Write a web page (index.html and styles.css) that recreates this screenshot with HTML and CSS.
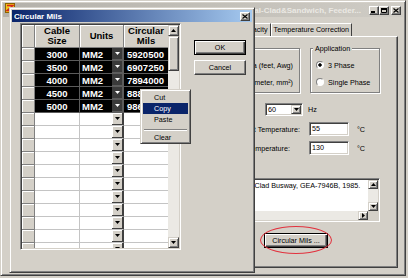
FILE: index.html
```html
<!DOCTYPE html>
<html>
<head>
  <title>Circular Mils</title>
  <link rel="stylesheet" href="styles.css">
</head>
<body>
  <div id="desktop">

    <!-- main application window, inactive behind the dialog -->
    <div class="window main-window">
      <div class="caption caption-inactive">
        <svg class="app-icon" width="10" height="10" viewBox="0 0 10 10">
          <rect x="0.5" y="0.5" width="9" height="9" fill="#f3c41a" stroke="#8a6400"/>
          <path d="M2 2.5h6l-6 5h6" fill="none" stroke="#d2261e" stroke-width="1.4"/>
        </svg>
        <span class="caption-text">Busway Ampacity - Metal-Clad&amp;Sandwich, Feeder...</span>
        <div class="caption-buttons">
          <span class="caption-btn"><svg width="6" height="5"><rect x="0" y="3" width="4" height="2"/></svg></span>
          <span class="caption-btn"><svg width="6" height="5"><path d="M0.5 0.5h5v4h-5z" fill="none" stroke="#000"/><rect x="0" y="0" width="6" height="2"/></svg></span>
          <span class="caption-btn btn-close"><svg width="6" height="5"><path d="M0.5 0.5l5 4M5.5 0.5l-5 4" stroke="#000" stroke-width="1.2"/></svg></span>
        </div>
      </div>

      <div class="client">
        <div class="tab-strip">
          <span class="tab">Ampacity</span>
          <span class="tab">Temperature Correction</span>
        </div>

        <div class="tab-panel">
          <div class="group-row">
            <div class="group group-units">
              <label class="radio-row"><span class="radio checked"></span>America (feet, Awg)</label>
              <label class="radio-row"><span class="radio"></span>International (meter, mm²)</label>
            </div>
            <div class="group group-app">
              <span class="group-label">Application</span>
              <label class="radio-row"><span class="radio checked"></span>3 Phase</label>
              <label class="radio-row"><span class="radio"></span>Single Phase</label>
            </div>
          </div>

          <div class="field-row row-hz">
            <span class="field-label">System Frequency:</span>
            <div class="combo">
              <span class="combo-value">60</span>
              <span class="combo-btn"><svg width="5" height="3"><path d="M0 0h5L2.5 3z"/></svg></span>
            </div>
            <span class="unit">Hz</span>
          </div>
          <div class="field-row row-temp">
            <span class="field-label">Ambient Temperature:</span>
            <span class="text-field">55</span>
            <span class="unit">°C</span>
          </div>
          <div class="field-row row-temp">
            <span class="field-label label-short">Max. Conductor Temperature:</span>
            <span class="text-field">130</span>
            <span class="unit">°C</span>
          </div>

          <div class="notes">
            <div class="notes-main">
              <div class="notes-text">Reference: GE Metal-Clad Busway, GEA-7946B, 1985.</div>
              <div class="vscroll notes-vscroll">
                <span class="scroll-btn"><svg width="5" height="3"><path d="M0 3h5L2.5 0z"/></svg></span>
                <span class="scroll-track"></span>
                <span class="scroll-btn"><svg width="5" height="3"><path d="M0 0h5L2.5 3z"/></svg></span>
              </div>
            </div>
            <div class="notes-hscroll">
              <span class="scroll-track"></span>
              <span class="scroll-btn"><svg width="3" height="5"><path d="M0 0v5L3 2.5z"/></svg></span>
              <span class="scroll-corner"></span>
            </div>
          </div>

          <button class="btn btn-default btn-circular">Circular Mils ...</button>
        </div>
      </div>
    </div>

    <!-- Circular Mils dialog -->
    <div class="window dialog">
      <div class="caption caption-active">
        <span class="caption-text">Circular Mils</span>
        <span class="caption-btn"><svg width="6" height="5"><path d="M0.5 0.5l5 4M5.5 0.5l-5 4" stroke="#000" stroke-width="1.2"/></svg></span>
      </div>

      <div class="dialog-body">
        <div class="grid">
          <div class="grid-body">
            <div class="grid-row grid-head">
              <span class="cell c-hdr"></span>
              <span class="cell c-size">Cable<br>Size</span>
              <span class="cell c-units">Units</span>
              <span class="cell c-mils">Circular<br>Mils</span>
            </div>

            <div class="grid-row selected">
              <span class="cell c-hdr"></span>
              <span class="cell c-size">3000</span>
              <span class="cell c-units">MM2<span class="dd"><svg width="5" height="3"><path d="M0 0h5L2.5 3z"/></svg></span></span>
              <span class="cell c-mils">5920500</span>
            </div>
            <div class="grid-row selected">
              <span class="cell c-hdr"></span>
              <span class="cell c-size">3500</span>
              <span class="cell c-units">MM2<span class="dd"><svg width="5" height="3"><path d="M0 0h5L2.5 3z"/></svg></span></span>
              <span class="cell c-mils">6907250</span>
            </div>
            <div class="grid-row selected">
              <span class="cell c-hdr"></span>
              <span class="cell c-size">4000</span>
              <span class="cell c-units">MM2<span class="dd"><svg width="5" height="3"><path d="M0 0h5L2.5 3z"/></svg></span></span>
              <span class="cell c-mils">7894000</span>
            </div>
            <div class="grid-row selected">
              <span class="cell c-hdr"></span>
              <span class="cell c-size">4500</span>
              <span class="cell c-units">MM2<span class="dd"><svg width="5" height="3"><path d="M0 0h5L2.5 3z"/></svg></span></span>
              <span class="cell c-mils">8880750</span>
            </div>
            <div class="grid-row selected">
              <span class="cell c-hdr"></span>
              <span class="cell c-size">5000</span>
              <span class="cell c-units">MM2<span class="dd"><svg width="5" height="3"><path d="M0 0h5L2.5 3z"/></svg></span></span>
              <span class="cell c-mils">9867500</span>
            </div>

            <div class="grid-row"><span class="cell c-hdr"></span><span class="cell c-size"></span><span class="cell c-units"><span class="dd"><svg width="5" height="3"><path d="M0 0h5L2.5 3z"/></svg></span></span><span class="cell c-mils"></span></div>
            <div class="grid-row"><span class="cell c-hdr"></span><span class="cell c-size"></span><span class="cell c-units"><span class="dd"><svg width="5" height="3"><path d="M0 0h5L2.5 3z"/></svg></span></span><span class="cell c-mils"></span></div>
            <div class="grid-row"><span class="cell c-hdr"></span><span class="cell c-size"></span><span class="cell c-units"><span class="dd"><svg width="5" height="3"><path d="M0 0h5L2.5 3z"/></svg></span></span><span class="cell c-mils"></span></div>
            <div class="grid-row"><span class="cell c-hdr"></span><span class="cell c-size"></span><span class="cell c-units"><span class="dd"><svg width="5" height="3"><path d="M0 0h5L2.5 3z"/></svg></span></span><span class="cell c-mils"></span></div>
            <div class="grid-row"><span class="cell c-hdr"></span><span class="cell c-size"></span><span class="cell c-units"><span class="dd"><svg width="5" height="3"><path d="M0 0h5L2.5 3z"/></svg></span></span><span class="cell c-mils"></span></div>
            <div class="grid-row"><span class="cell c-hdr"></span><span class="cell c-size"></span><span class="cell c-units"><span class="dd"><svg width="5" height="3"><path d="M0 0h5L2.5 3z"/></svg></span></span><span class="cell c-mils"></span></div>
            <div class="grid-row"><span class="cell c-hdr"></span><span class="cell c-size"></span><span class="cell c-units"><span class="dd"><svg width="5" height="3"><path d="M0 0h5L2.5 3z"/></svg></span></span><span class="cell c-mils"></span></div>
            <div class="grid-row"><span class="cell c-hdr"></span><span class="cell c-size"></span><span class="cell c-units"><span class="dd"><svg width="5" height="3"><path d="M0 0h5L2.5 3z"/></svg></span></span><span class="cell c-mils"></span></div>
            <div class="grid-row"><span class="cell c-hdr"></span><span class="cell c-size"></span><span class="cell c-units"><span class="dd"><svg width="5" height="3"><path d="M0 0h5L2.5 3z"/></svg></span></span><span class="cell c-mils"></span></div>
            <div class="grid-row"><span class="cell c-hdr"></span><span class="cell c-size"></span><span class="cell c-units"><span class="dd"><svg width="5" height="3"><path d="M0 0h5L2.5 3z"/></svg></span></span><span class="cell c-mils"></span></div>
            <div class="grid-row"><span class="cell c-hdr"></span><span class="cell c-size"></span><span class="cell c-units"><span class="dd"><svg width="5" height="3"><path d="M0 0h5L2.5 3z"/></svg></span></span><span class="cell c-mils"></span></div>
          </div>

          <div class="vscroll grid-vscroll">
            <span class="scroll-btn"><svg width="5" height="3"><path d="M0 3h5L2.5 0z"/></svg></span>
            <span class="scroll-thumb"></span>
            <span class="scroll-track"></span>
            <span class="scroll-btn"><svg width="5" height="3"><path d="M0 0h5L2.5 3z"/></svg></span>
          </div>
        </div>

        <div class="dialog-buttons">
          <button class="btn btn-default">OK</button>
          <button class="btn">Cancel</button>
        </div>
      </div>
    </div>

    <!-- right-click menu over the grid -->
    <div class="context-menu">
      <div class="menu-item">Cut</div>
      <div class="menu-item active">Copy</div>
      <div class="menu-item">Paste</div>
      <div class="menu-sep"></div>
      <div class="menu-item">Clear</div>
    </div>

    <!-- red marker round the Circular Mils button -->
    <div class="callout-ring"></div>
  </div>
</body>
</html>
```

FILE: styles.css
```css
* {
  box-sizing: border-box;
}

body {
  margin: 0;
  background: #d4d0c8;
  font-family: "Liberation Sans", Arial, sans-serif;
  font-size: 7.2px;
  color: #000;
}

#desktop {
  position: relative;
  width: 408px;
  height: 278px;
  overflow: hidden;
}

/* classic 3d window frame */
.window {
  display: flex;
  flex-direction: column;
  background: #d4d0c8;
  border: 1px solid;
  border-color: #d4d0c8 #404040 #404040 #d4d0c8;
  box-shadow: inset 1px 1px 0 #fff, inset -1px -1px 0 #808080;
  padding: 2px;
}

.main-window {
  width: 406px;
  height: 276px;
}

.caption {
  display: flex;
  align-items: center;
  flex-shrink: 0;
  padding: 0 2px;
}

.caption-inactive {
  height: 14px;
  background: linear-gradient(to right, #b4b1aa, #cfccc5);
  color: #ebe9e4;
}

.caption-active {
  height: 12px;
  background: linear-gradient(to right, #0a246a, #a6caf0);
  color: #fff;
}

.caption-text {
  flex: 1;
  font-size: 8px;
  font-weight: bold;
  white-space: nowrap;
  overflow: hidden;
}

.caption-inactive .caption-text {
  text-align: right;
  padding-right: 8px;
}

.app-icon {
  align-self: flex-start;
}

.caption-buttons {
  display: flex;
}

.caption-btn {
  display: flex;
  align-items: center;
  justify-content: center;
  width: 10px;
  height: 9px;
  background: #d4d0c8;
  border: 1px solid;
  border-color: #fff #404040 #404040 #fff;
  box-shadow: inset -1px -1px 0 #808080;
}

.btn-close {
  margin-left: 2px;
}

/* main window client area */
.client {
  flex: 1;
  display: flex;
  flex-direction: column;
  padding: 6px 5px 5px 6px;
}

.tab-strip {
  display: flex;
  height: 13px;
  padding-left: 226px;
}

.tab {
  flex-shrink: 0;
  padding: 0 2px;
  line-height: 12px;
  white-space: nowrap;
  border-top: 1px solid #fff;
  border-left: 1px solid #fff;
  border-right: 1px solid #404040;
}

.tab-panel {
  flex: 1;
  display: flex;
  flex-direction: column;
  align-items: flex-start;
  border: 1px solid;
  border-color: #fff #404040 #404040 #fff;
  box-shadow: inset -1px -1px 0 #808080;
  padding: 11px 0 0 11px;
}

.group-row {
  display: flex;
  gap: 10px;
}

.group {
  position: relative;
  display: flex;
  flex-direction: column;
  gap: 5px;
  border: 1px solid #808080;
  box-shadow: inset 1px 1px 0 #fff, 1px 1px 0 #fff;
  padding: 10px 6px 4px 5px;
}

.group-units {
  width: 279px;
}

.group-units .radio-row {
  justify-content: flex-end;
}

.group-app {
  width: 70px;
}

.group-label {
  position: absolute;
  top: -5px;
  left: 2px;
  padding: 0 2px;
  line-height: 9px;
  background: #d4d0c8;
}

.radio-row {
  display: flex;
  align-items: center;
  gap: 4px;
  height: 12px;
  white-space: nowrap;
}

.radio {
  width: 8px;
  height: 8px;
  border-radius: 50%;
  background: #fff;
  border: 1px solid;
  border-color: #808080 #fff #fff #808080;
}

.radio.checked {
  background: radial-gradient(circle, #000 1.4px, #fff 2px);
}

.field-row {
  display: flex;
  align-items: center;
}

.field-label {
  text-align: right;
  white-space: nowrap;
}

.unit {
  white-space: nowrap;
}

.row-hz {
  height: 13px;
  margin-top: 10px;
}

.row-hz .field-label {
  width: 228px;
  margin-right: 16px;
}

.row-hz .unit {
  margin-left: 5px;
}

.row-temp {
  height: 14px;
  margin-top: 6px;
}

.row-temp + .row-temp {
  margin-top: 5px;
}

.row-temp .field-label {
  width: 279px;
  margin-right: 9px;
}

.row-temp .field-label.label-short {
  width: 269px;
  margin-right: 19px;
}

.row-temp .unit {
  margin-left: 8px;
}

/* sunken white fields */
.combo,
.text-field,
.notes,
.grid {
  background: #fff;
  border: 1px solid;
  border-color: #808080 #fff #fff #808080;
  box-shadow: inset 1px 1px 0 #404040, inset -1px -1px 0 #d4d0c8;
  padding: 1px;
}

.combo {
  display: flex;
  width: 38px;
  height: 13px;
}

.combo-value {
  flex: 1;
  padding-left: 1px;
  line-height: 9px;
}

.combo-btn,
.scroll-btn {
  display: flex;
  align-items: center;
  justify-content: center;
  flex-shrink: 0;
  background: #d4d0c8;
  border: 1px solid;
  border-color: #d4d0c8 #404040 #404040 #d4d0c8;
  box-shadow: inset 1px 1px 0 #fff, inset -1px -1px 0 #808080;
}

.combo-btn {
  width: 10px;
}

.text-field {
  width: 40px;
  height: 14px;
  padding: 1px 2px;
  line-height: 9px;
}

.notes {
  display: flex;
  flex-direction: column;
  width: 199px;
  height: 44px;
  margin: 23px 0 0 160px;
}

.notes-main {
  flex: 1;
  display: flex;
}

.notes-text {
  flex: 1;
  padding: 1px 2px;
  line-height: 9px;
  white-space: nowrap;
  overflow: hidden;
}

.vscroll {
  display: flex;
  flex-direction: column;
  background: #ebe9e4;
}

.notes-vscroll {
  width: 10px;
}

.notes-vscroll .scroll-btn {
  height: 9px;
}

.notes-hscroll {
  display: flex;
  height: 9px;
}

.notes-hscroll .scroll-track {
  flex: 1;
  background: #ebe9e4;
}

.notes-hscroll .scroll-btn {
  width: 10px;
}

.scroll-corner {
  width: 10px;
  background: #d4d0c8;
}

.scroll-track {
  flex: 1;
}

.scroll-thumb {
  height: 35px;
  background: #d4d0c8;
  border: 1px solid;
  border-color: #d4d0c8 #404040 #404040 #d4d0c8;
  box-shadow: inset 1px 1px 0 #fff, inset -1px -1px 0 #808080;
}

/* push buttons */
.btn {
  display: flex;
  align-items: center;
  justify-content: center;
  padding: 0;
  font: inherit;
  color: #000;
  background: #d4d0c8;
  border: 1px solid;
  border-color: #fff #404040 #404040 #fff;
  box-shadow: inset -1px -1px 0 #808080;
}

.btn-default {
  border-color: #000;
  box-shadow: inset 1px 1px 0 #fff, inset -1px -1px 0 #404040, inset -2px -2px 0 #808080;
}

.btn-circular {
  width: 64px;
  height: 15px;
  margin: 11px 0 0 243px;
}

/* dialog */
.dialog {
  position: absolute;
  left: 9px;
  top: 7px;
  width: 246px;
  height: 266px;
}

.dialog-body {
  display: flex;
  padding: 1px 0 0 8px;
}

.grid {
  display: flex;
  width: 161px;
  height: 227px;
}

.grid-body {
  width: 146px;
  overflow: hidden;
}

.grid-row {
  display: flex;
  height: 13px;
}

.cell {
  display: flex;
  align-items: center;
  flex-shrink: 0;
  height: 100%;
  white-space: nowrap;
  overflow: hidden;
  font-size: 9.5px;
  font-weight: bold;
  border-right: 1px solid #c4c4c4;
  border-bottom: 1px solid #c4c4c4;
}

.c-hdr {
  width: 13px;
  background: #d4d0c8;
  border-color: #808080;
  box-shadow: inset 1px 1px 0 #fff;
}

.c-size {
  width: 45px;
  justify-content: center;
}

.c-units {
  width: 44px;
  padding-left: 2px;
  border-right-color: #404040;
}

.c-mils {
  width: 44px;
  padding-left: 3px;
  border-right: 0;
}

.grid-head {
  height: 23px;
}

.grid-head .cell {
  justify-content: center;
  padding: 0;
  text-align: center;
  line-height: 10px;
  background: #d4d0c8;
  border-color: #808080;
  box-shadow: inset 1px 1px 0 #fff;
}

.selected .cell:not(.c-hdr) {
  background: #000;
  color: #fff;
  border-bottom-color: #5c5c5c;
  border-right-color: #5c5c5c;
}

.dd {
  display: flex;
  align-items: center;
  justify-content: center;
  width: 11px;
  height: 100%;
  margin-left: auto;
  background: #d4d0c8;
  border-right: 1px solid #404040;
  border-bottom: 1px solid #404040;
  box-shadow: inset 1px 1px 0 #fff;
}

.selected .dd {
  background: #3a3a3a;
  border-color: #5c5c5c;
  box-shadow: none;
  fill: #fff;
}

.grid-vscroll {
  width: 11px;
}

.grid-vscroll .scroll-btn {
  height: 11px;
}

.dialog-buttons {
  display: flex;
  flex-direction: column;
  gap: 5px;
  margin: 17px 0 0 13px;
}

.dialog-buttons .btn {
  width: 52px;
  height: 15px;
}

/* context menu */
.context-menu {
  position: absolute;
  left: 140px;
  top: 89px;
  width: 51px;
  height: 55px;
  padding: 2px;
  background: #d4d0c8;
  border: 1px solid;
  border-color: #d4d0c8 #404040 #404040 #d4d0c8;
  box-shadow: inset 1px 1px 0 #fff, inset -1px -1px 0 #808080;
}

.menu-item {
  height: 11px;
  padding-left: 11px;
  line-height: 11px;
}

.menu-item.active {
  background: #0a246a;
  color: #fff;
}

.menu-sep {
  margin: 4px 1px 1px;
  border-top: 1px solid #808080;
  border-bottom: 1px solid #fff;
}

.callout-ring {
  position: absolute;
  left: 260px;
  top: 226px;
  width: 72px;
  height: 28px;
  border: 1px solid #e2323e;
  border-radius: 50%;
}
```
